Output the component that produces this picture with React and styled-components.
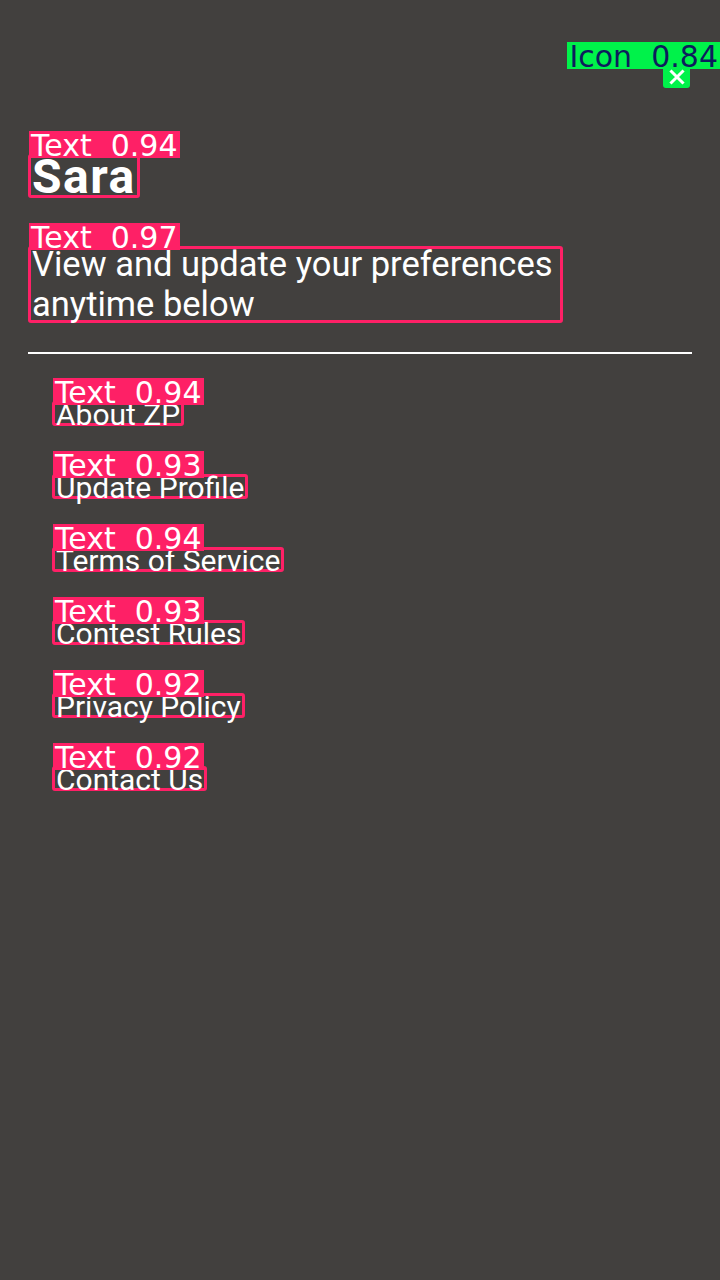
import React from "react";
import styled, { createGlobalStyle } from "styled-components";

const GlobalStyle = createGlobalStyle`
	html, body {
		margin: 0;
		padding: 0;
		background: #42403e;
	}
	* {
		box-sizing: border-box;
	}
`;

const Color = {
	BG: "#42403e",
	WHITE: "#ffffff",
	PINK: "#fe2066",
	GREEN: "#00f24a",
	NAVY: "#0d1d5c",
};

const Page = styled.main`
	display: flex;
	flex-direction: column;
	align-items: stretch;
	min-height: 1280px;
	background: ${Color.BG};
	padding: 65px 28px 0;
	font-family: Roboto, "Noto Sans", sans-serif;
	color: ${Color.WHITE};
`;

const TopBar = styled.div`
	display: flex;
	justify-content: flex-end;
	padding-right: 2px;
`;

const Header = styled.header`
	display: flex;
	flex-direction: column;
	align-items: flex-start;
	gap: 48px;
	margin-top: 66px;
`;

// detection frame drawn round a part, with its tag sitting above
const Frame = styled.div`
	position: relative;
	display: inline-flex;
	border: 3px solid ${(p) => (p.$tone === "green" ? Color.GREEN : Color.PINK)};
	border-radius: 3px;
	background: ${(p) => (p.$fill ? Color.GREEN : "transparent")};
`;

const Tag = styled.span`
	position: absolute;
	left: ${(p) => (p.$right ? "auto" : "-2px")};
	right: ${(p) => (p.$right ? "-33px" : "auto")};
	bottom: calc(100% - 1px);
	z-index: 1;
	height: 27px;
	padding: 0 2px;
	background: ${(p) => (p.$tone === "green" ? Color.GREEN : Color.PINK)};
	color: ${(p) => (p.$tone === "green" ? Color.NAVY : Color.WHITE)};
	font-family: "DejaVu Sans", sans-serif;
	font-size: 30px;
	line-height: 29px;
	white-space: pre;
	letter-spacing: 0;
`;

const CloseButton = styled.button`
	display: flex;
	align-items: center;
	justify-content: center;
	width: 21px;
	height: 17px;
	padding: 0;
	border: none;
	background: transparent;
	cursor: pointer;
`;

const Name = styled.h1`
	margin: 0;
	padding: 0 1px;
	height: 38px;
	font-size: 48px;
	font-weight: 700;
	line-height: 40px;
	letter-spacing: 1.5px;
`;

const Intro = styled.p`
	margin: -5px 0 5px;
	padding: 0 0 0 1px;
	width: 529px;
	height: 71px;
	font-size: 34.5px;
	line-height: 40px;
	letter-spacing: 0;
	white-space: nowrap;
`;

const Divider = styled.hr`
	width: 100%;
	margin: 29px 0 0;
	border: none;
	border-top: 2px solid ${Color.WHITE};
`;

const Menu = styled.nav`
	display: flex;
	flex-direction: column;
	align-items: flex-start;
	gap: 48px;
	margin-top: 47px;
	padding-left: 24px;
`;

const MenuItem = styled.a`
	display: block;
	padding: 0 1px;
	font-size: 30px;
	line-height: 21px;
	height: 19px;
	color: ${Color.WHITE};
	text-decoration: none;
	cursor: pointer;
`;

const items = [
	{ label: "About ZP", score: "0.94" },
	{ label: "Update Profile", score: "0.93" },
	{ label: "Terms of Service", score: "0.94" },
	{ label: "Contest Rules", score: "0.93" },
	{ label: "Privacy Policy", score: "0.92" },
	{ label: "Contact Us", score: "0.92" },
];

export default function App() {
	return (
		<>
			<GlobalStyle />
			<Page>
				<TopBar>
					<Frame $tone="green" $fill>
						<Tag $tone="green" $right>{"Icon  0.84"}</Tag>
						<CloseButton aria-label="close">
							<svg width="16" height="16" viewBox="0 0 16 16">
								<path
									d="M2.5 2.5 L13.5 13.5 M13.5 2.5 L2.5 13.5"
									stroke={Color.WHITE}
									strokeWidth="3"
									strokeLinecap="square"
								/>
							</svg>
						</CloseButton>
					</Frame>
				</TopBar>

				<Header>
					<Frame>
						<Tag>{"Text  0.94"}</Tag>
						<Name>Sara</Name>
					</Frame>
					<Frame>
						<Tag>{"Text  0.97"}</Tag>
						<Intro>
							View and update your preferences
							<br />
							anytime below
						</Intro>
					</Frame>
				</Header>

				<Divider />

				<Menu>
					{items.map((item) => (
						<Frame key={item.label}>
							<Tag>{`Text  ${item.score}`}</Tag>
							<MenuItem>{item.label}</MenuItem>
						</Frame>
					))}
				</Menu>
			</Page>
		</>
	);
}
